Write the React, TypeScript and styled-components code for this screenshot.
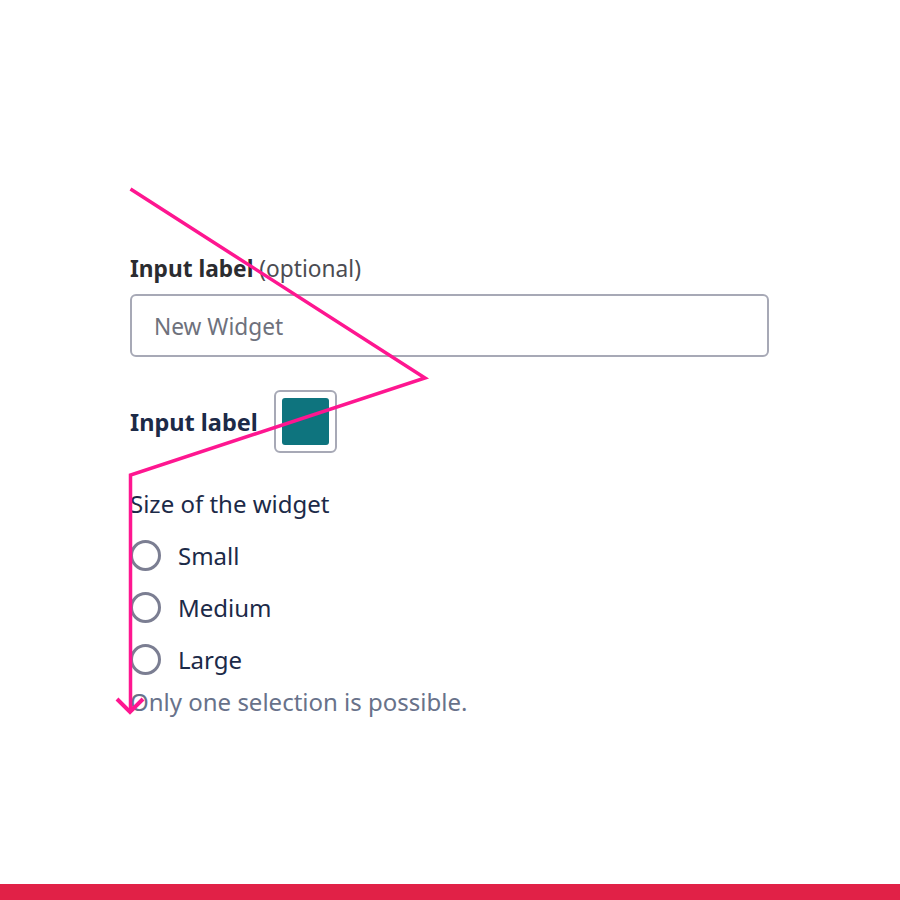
import React from "react";
import styled, { createGlobalStyle } from "styled-components";

const Global = createGlobalStyle`
  html, body { margin: 0; padding: 0; background: #ffffff; }
  body { font-family: "Noto Sans", "Open Sans", sans-serif; }
`;

const Page = styled.div`
  position: relative;
  width: 900px;
  height: 900px;
  display: flex;
  flex-direction: column;
  background: #ffffff;
  overflow: hidden;
`;

const Content = styled.div`
  flex: 1;
  padding: 253px 131px 0 130px;
  display: flex;
  flex-direction: column;
`;

const Field = styled.div`
  display: flex;
  flex-direction: column;
  gap: 9px;
`;

const Label = styled.label<{ $tone?: string; $size?: number }>`
  font-size: ${(p) => p.$size || 22.7}px;
  line-height: 32px;
  font-weight: 700;
  color: ${(p) => p.$tone || "#2b2c30"};
`;

const Optional = styled.span`
  font-weight: 400;
  color: #4b4c52;
`;

const TextInput = styled.input`
  box-sizing: border-box;
  width: 100%;
  height: 63px;
  border: 2px solid #a7a9b6;
  border-radius: 6px;
  padding: 2px 22px 0 22px;
  font-family: inherit;
  font-size: 22.7px;
  color: #2b2c30;
  outline: none;
  &::placeholder { color: #6e717c; }
`;

const ColorRow = styled.div`
  display: flex;
  align-items: center;
  gap: 16px;
  margin-top: 33px;
`;

const Swatch = styled.div`
  box-sizing: border-box;
  width: 63px;
  height: 63px;
  border: 2px solid #a7a9b6;
  border-radius: 6px;
  padding: 6px;
  display: flex;
`;

const SwatchFill = styled.div<{ $color: string }>`
  flex: 1;
  border-radius: 3px;
  background: ${(p) => p.$color};
`;

const Group = styled.fieldset`
  border: 0;
  margin: 35px 0 0 0;
  padding: 0;
  display: flex;
  flex-direction: column;
`;

const Legend = styled.legend`
  padding: 0;
  font-size: 24px;
  line-height: 32px;
  color: #1c2a48;
  margin-bottom: 9px;
`;

const Option = styled.label`
  display: flex;
  align-items: center;
  gap: 17px;
  height: 52px;
  font-size: 24px;
  color: #1c2a48;
`;

const Radio = styled.span`
  box-sizing: border-box;
  width: 31px;
  height: 31px;
  border-radius: 50%;
  border: 3px solid #7b7e92;
`;

const Helper = styled.div`
  font-size: 24px;
  line-height: 32px;
  color: #68728a;
  margin-top: 1px;
`;

const Footer = styled.div`
  height: 16px;
  background: #e12147;
`;

const Overlay = styled.svg`
  position: absolute;
  left: 0;
  top: 0;
  pointer-events: none;
`;

export default function App() {
  return (
    <Page>
      <Global />
      <Content>
        <Field>
          <Label>
            Input label <Optional>(optional)</Optional>
          </Label>
          <TextInput placeholder="New Widget" />
        </Field>
        <ColorRow>
          <Label $tone="#1c2a48" $size={23.5}>Input label</Label>
          <Swatch>
            <SwatchFill $color="#0e747e" />
          </Swatch>
        </ColorRow>
        <Group>
          <Legend>Size of the widget</Legend>
          {["Small", "Medium", "Large"].map((o) => (
            <Option key={o}>
              <Radio />
              {o}
            </Option>
          ))}
          <Helper>Only one selection is possible.</Helper>
        </Group>
      </Content>
      <Footer />
      <Overlay width="900" height="900" viewBox="0 0 900 900">
        <polyline
          points="130.5,189 425,378 130.5,475 130.5,711"
          fill="none"
          stroke="#fe1690"
          strokeWidth="3.5"
          strokeLinejoin="miter"
        />
        <polyline
          points="117,699 130,712 143,699"
          fill="none"
          stroke="#fe1690"
          strokeWidth="4"
        />
      </Overlay>
    </Page>
  );
}
